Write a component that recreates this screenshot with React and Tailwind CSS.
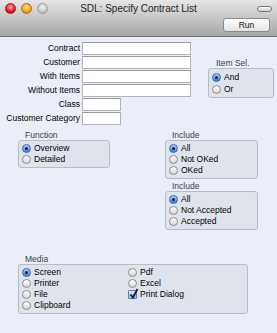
import React from 'react';

const Radio = ({ checked }) =>
  checked ? (
    <span className="w-[9px] h-[9px] rounded-full border border-[#3b66a8] bg-gradient-to-b from-[#a9cdf6] to-[#3a7fdc] flex items-center justify-center shrink-0">
      <span className="w-[3px] h-[3px] rounded-full bg-[#14233d]"></span>
    </span>
  ) : (
    <span className="w-[9px] h-[9px] rounded-full border border-[#8c8c8c] bg-gradient-to-b from-[#ffffff] to-[#d6d6d6] shrink-0"></span>
  );

const Check = () => (
  <span className="w-[9px] h-[9px] rounded-[1px] border border-[#5a7db3] bg-gradient-to-b from-[#dbe8fa] to-[#95bbec] shrink-0 relative">
    <svg className="absolute left-[0px] top-[-3px]" width="10" height="11" viewBox="0 0 10 11">
      <path d="M1.5 6.5 L4 9.5 L8.5 1" fill="none" stroke="#141a2e" strokeWidth="1.8" />
    </svg>
  </span>
);

const Option = ({ label, checked, box }) => (
  <div className="flex items-center h-[11px] gap-[3px]">
    {box ? <Check /> : <Radio checked={checked} />}
    <span className="leading-none">{label}</span>
  </div>
);

const Group = ({ title, width, children, labelClass = 'h-[10px] leading-[10px]', indent = 'pl-[7px]' }) => (
  <div className={width}>
    <div className={`${labelClass} ${indent} text-[#3a3f4a]`}>{title}</div>
    <div className="rounded-[3px] border border-[#b7bdc7] bg-[#dfe4ec] pl-[3px] pt-[2px] pb-[2px]">
      {children}
    </div>
  </div>
);

const Field = ({ label, small }) => (
  <>
    <div className="text-right h-[13px] leading-[13px] text-black">{label}</div>
    <div className={`${small ? 'w-[39px]' : 'w-[109px]'} h-[13px] bg-white border border-[#b4b4b4] border-t-[#9a9a9a]`}></div>
  </>
);

export default function App() {
  return (
    <div className="w-[277px] h-[333px] bg-[#e9eef8] font-['Liberation_Sans',sans-serif] text-[8.5px] text-black overflow-hidden">
      {/* Title bar + toolbar */}
      <div className="h-[37px] bg-gradient-to-b from-[#e6e6e6] to-[#a7a7a7] border-b border-[#737373]">
        <div className="grid grid-cols-[1fr_auto_1fr] items-center h-[16px] pt-[1px]">
          <div className="flex items-center gap-[5px] pl-[5px]">
            <span className="w-[11px] h-[11px] rounded-full bg-[radial-gradient(circle_at_50%_35%,#ffb3b3,#e0151b_60%,#9b0b10)] border border-[#a51a1a]"></span>
            <span className="w-[11px] h-[11px] rounded-full bg-[radial-gradient(circle_at_50%_35%,#ffe49a,#f0a11a_60%,#b46a06)] border border-[#b07010]"></span>
            <span className="w-[11px] h-[11px] rounded-full bg-[radial-gradient(circle_at_50%_35%,#f2f2f2,#c9c9c9_60%,#a5a5a5)] border border-[#9a9a9a]"></span>
          </div>
          <div className="text-[10px] text-[#222] leading-none">SDL: Specify Contract List</div>
          <div className="flex justify-end pr-[5px]">
            <span className="w-[15px] h-[6px] rounded-full border border-[#777] bg-gradient-to-b from-[#fafafa] to-[#cfcfcf]"></span>
          </div>
        </div>
        <div className="flex justify-end pr-[7px] pt-[2px]">
          <div className="w-[47px] h-[14px] rounded-[3px] border border-[#8a8a8a] bg-gradient-to-b from-[#ffffff] to-[#e2e2e2] flex items-center justify-center text-[8.5px] text-[#111]">
            Run
          </div>
        </div>
      </div>

      {/* Fields */}
      <div className="flex pt-[5px]">
        <div className="grid grid-cols-[80px_auto] gap-x-[2px] gap-y-[1px] items-center">
          <Field label="Contract" />
          <Field label="Customer" />
          <Field label="With Items" />
          <Field label="Without Items" />
          <Field label="Class" small />
          <Field label="Customer Category" small />
        </div>
        <div className="ml-[17px] pt-[17px]">
          <Group title="Item Sel." width="w-[66px]" labelClass="h-[9px] leading-[9px]" indent="pl-[8px]">
            <div className="flex items-center h-[12px] gap-[3px]"><Radio checked /><span>And</span></div>
            <div className="flex items-center h-[12px] gap-[3px]"><Radio /><span>Or</span></div>
          </Group>
        </div>
      </div>

      {/* Function / Include */}
      <div className="flex mt-[5px] pl-[18px]">
        <Group title="Function" width="w-[92px]">
          <Option label="Overview" checked />
          <Option label="Detailed" />
        </Group>
        <div className="ml-[55px] flex flex-col gap-[2px]">
          <Group title="Include" width="w-[93px]">
            <Option label="All" checked />
            <Option label="Not OKed" />
            <Option label="OKed" />
          </Group>
          <Group title="Include" width="w-[93px]">
            <Option label="All" checked />
            <Option label="Not Accepted" />
            <Option label="Accepted" />
          </Group>
        </div>
      </div>

      {/* Media */}
      <div className="mt-[24px] pl-[18px]">
        <Group title="Media" width="w-[230px]">
          <div className="flex">
            <div className="w-[106px]">
              <Option label="Screen" checked />
              <Option label="Printer" />
              <Option label="File" />
              <Option label="Clipboard" />
            </div>
            <div>
              <Option label="Pdf" />
              <Option label="Excel" />
              <Option label="Print Dialog" box />
            </div>
          </div>
        </Group>
      </div>
    </div>
  );
}
